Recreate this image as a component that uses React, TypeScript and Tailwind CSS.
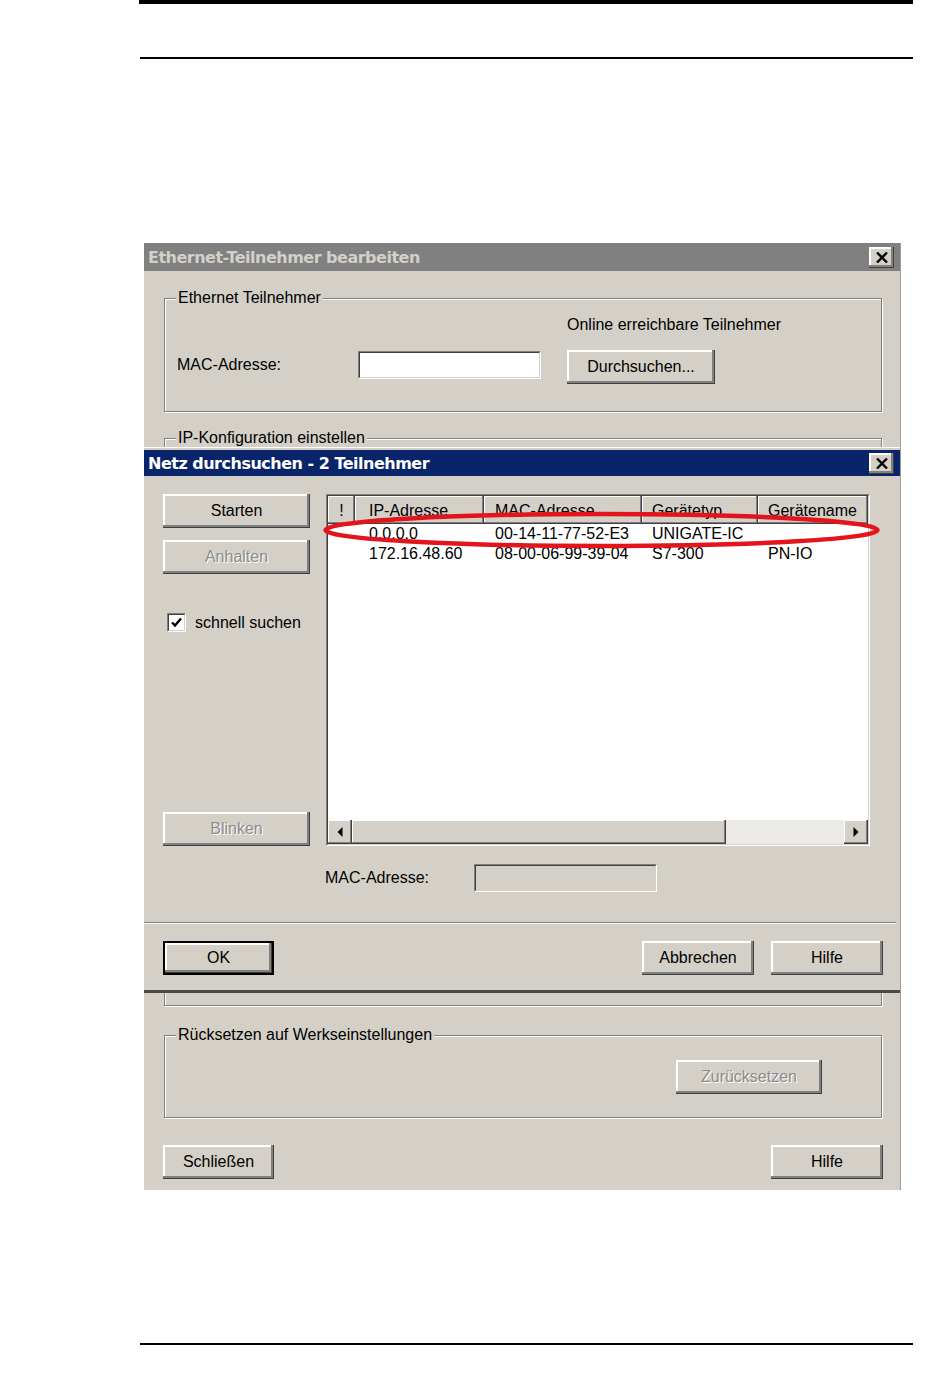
import type { ReactNode } from "react";

const raised =
  "shadow-[inset_-1px_-1px_0_#404040,inset_-3px_-3px_0_#808080,inset_2px_2px_0_#ffffff]";
const headerRaised =
  "shadow-[inset_-1px_-1px_0_#404040,inset_-2px_-2px_0_#808080,inset_1px_1px_0_#ffffff]";

const columns = [
  { title: "!", width: "w-[27px]", pad: "justify-center" },
  { title: "IP-Adresse", width: "w-[129px]", pad: "pl-[14px]" },
  { title: "MAC-Adresse", width: "w-[158px]", pad: "pl-[11px]" },
  { title: "Gerätetyp", width: "w-[116px]", pad: "pl-[10px]" },
  { title: "Gerätename", width: "w-[110px]", pad: "pl-[10px]" },
];

const rows = [
  ["", "0.0.0.0", "00-14-11-77-52-E3", "UNIGATE-IC", ""],
  ["", "172.16.48.60", "08-00-06-99-39-04", "S7-300", "PN-IO"],
];

function Button({
  label,
  className = "",
  disabled = false,
  isDefault = false,
}: {
  label: string;
  className?: string;
  disabled?: boolean;
  isDefault?: boolean;
}) {
  return (
    <div
      className={`flex h-[34px] shrink-0 items-center justify-center bg-[#d4d0c8] text-[16px] ${
        isDefault ? "border-2 border-black" : ""
      } ${raised} ${
        disabled ? "text-[#8c8c8c] [text-shadow:1px_1px_0_#ffffff]" : "text-black"
      } ${className}`}
    >
      {label}
    </div>
  );
}

function CloseBox() {
  return (
    <div className={`flex h-[21px] w-[25px] items-center justify-center bg-[#d4d0c8] ${raised}`}>
      <svg width="12" height="11" viewBox="0 0 12 11">
        <path d="M1 0.5 L11 10.5 M11 0.5 L1 10.5" stroke="#000" strokeWidth="2.4" />
      </svg>
    </div>
  );
}

function TitleBar({ title, active, height }: { title: string; active?: boolean; height: string }) {
  return (
    <div
      className={`flex ${height} items-center justify-between pl-[4px] pr-[6px] ${
        active ? "bg-[#0a246a] text-white" : "bg-[#808080] text-[#d4d0c8]"
      }`}
    >
      <span className="pt-[1px] font-['DejaVu_Sans',sans-serif] text-[16px] font-bold tracking-[-0.5px]">
        {title}
      </span>
      <CloseBox />
    </div>
  );
}

function GroupBox({
  label,
  className = "",
  children,
}: {
  label: string;
  className?: string;
  children?: ReactNode;
}) {
  return (
    <div
      className={`relative border border-[#808080] shadow-[inset_1px_1px_0_#ffffff,1px_1px_0_#ffffff] ${className}`}
    >
      <span className="absolute left-[11px] top-[-10px] bg-[#d4d0c8] px-[2px] text-[16px] leading-[18px]">
        {label}
      </span>
      {children}
    </div>
  );
}

function Sunken({ className = "", children }: { className?: string; children?: ReactNode }) {
  return (
    <div className={`border border-t-[#808080] border-l-[#808080] border-b-white border-r-white ${className}`}>
      <div className="h-full w-full border border-t-[#404040] border-l-[#404040] border-b-[#d4d0c8] border-r-[#d4d0c8]">
        {children}
      </div>
    </div>
  );
}

function Arrow({ dir }: { dir: "left" | "right" }) {
  return (
    <div className={`flex h-[24px] w-[24px] items-center justify-center bg-[#d4d0c8] ${headerRaised}`}>
      <svg width="6" height="10" viewBox="0 0 6 10">
        <path d={dir === "left" ? "M5.5 0 L0.5 5 L5.5 10 Z" : "M0.5 0 L5.5 5 L0.5 10 Z"} fill="#000" />
      </svg>
    </div>
  );
}

function ListView() {
  return (
    <Sunken className="ml-[16px] h-[352px] w-[544px]">
      <div className="flex h-full flex-col bg-white">
        <div className="flex h-[28px]">
          {columns.map((c) => (
            <div
              key={c.title}
              className={`flex items-center bg-[#d4d0c8] pt-[2px] text-[16px] ${c.width} ${c.pad} ${headerRaised}`}
            >
              {c.title}
            </div>
          ))}
        </div>
        {rows.map((r, i) => (
          <div key={i} className="flex h-[20px] items-center text-[16px]">
            {r.map((cell, j) => (
              <div key={j} className={`flex ${columns[j].width} ${columns[j].pad}`}>
                {cell}
              </div>
            ))}
          </div>
        ))}
        <div className="flex-1" />
        <div className="flex h-[24px]">
          <Arrow dir="left" />
          <div className={`w-[374px] bg-[#d4d0c8] ${headerRaised}`} />
          <div className="flex-1 bg-[#eceae6]" />
          <Arrow dir="right" />
        </div>
      </div>
    </Sunken>
  );
}

function Checkbox() {
  return (
    <Sunken className="h-[19px] w-[19px]">
      <div className="flex h-full w-full items-center justify-center bg-white">
        <svg width="13" height="13" viewBox="0 0 13 13">
          <path d="M2 6.5 L5 9.5 L11 2.5" fill="none" stroke="#000" strokeWidth="2.4" />
        </svg>
      </div>
    </Sunken>
  );
}

function SearchDialog() {
  return (
    <div className="absolute left-0 top-[204px] h-[546px] w-[756px] border-t border-b-[3px] border-t-white border-b-[#4a4a4a] bg-[#d4d0c8] pt-[2px]">
      <TitleBar title="Netz durchsuchen - 2 Teilnehmer" active height="h-[26px]" />
      <div className="flex flex-col pt-[18px]">
        <div className="flex h-[352px] pl-[19px]">
          <div className="flex w-[147px] flex-col">
            <Button label="Starten" />
            <Button label="Anhalten" disabled className="mt-[12px]" />
            <div className="ml-[4px] mt-[39px] flex h-[19px] items-center gap-[9px] text-[16px]">
              <Checkbox />
              <span>schnell suchen</span>
            </div>
            <Button label="Blinken" disabled className="mt-auto" />
          </div>
          <ListView />
        </div>
        <div className="mt-[18px] flex h-[28px] items-center pl-[181px] text-[16px]">
          <span className="w-[149px]">MAC-Adresse:</span>
          <Sunken className="h-[28px] w-[183px]" />
        </div>
        <div className="mr-[4px] mt-[30px] h-[2px] border-t border-b border-t-[#808080] border-b-white" />
        <div className="mt-[17px] flex pl-[19px] pr-[17px]">
          <Button label="OK" isDefault className="w-[111px]" />
          <Button label="Abbrechen" className="ml-auto w-[112px]" />
          <Button label="Hilfe" className="ml-[17px] w-[112px]" />
        </div>
      </div>
      <svg
        className="absolute left-[170px] top-[58px]"
        width="576"
        height="48"
        viewBox="0 0 576 48"
      >
        <ellipse cx="287.5" cy="24" rx="276" ry="16" fill="none" stroke="#e3141c" strokeWidth="4.5" />
      </svg>
    </div>
  );
}

export default function App() {
  return (
    <div className="h-[1397px] w-[950px] overflow-hidden bg-white font-['Liberation_Sans',Arial,sans-serif] text-black">
      <div className="ml-[139px] h-[4px] w-[774px] bg-black" />
      <div className="ml-[140px] mt-[53px] h-[2px] w-[773px] bg-black" />

      <div className="relative ml-[144px] mt-[184px] h-[947px] w-[757px] border-r border-[#a09c94] bg-[#d4d0c8]">
        <TitleBar title="Ethernet-Teilnehmer bearbeiten" height="h-[28px]" />

        <GroupBox label="Ethernet Teilnehmer" className="ml-[20px] mt-[27px] h-[114px] w-[718px]">
          <div className="grid grid-cols-[155px_183px_auto] gap-x-[26px] gap-y-[16px] pl-[12px] pt-[17px] text-[16px]">
            <div />
            <div />
            <div className="leading-[18px]">Online erreichbare Teilnehmer</div>
            <div className="mt-[1px] leading-[28px]">MAC-Adresse:</div>
            <Sunken className="mt-[1px] h-[28px] w-[183px]">
              <div className="h-full w-full bg-white" />
            </Sunken>
            <Button label="Durchsuchen..." className="w-[148px]" />
          </div>
        </GroupBox>

        <GroupBox label="IP-Konfiguration einstellen" className="ml-[20px] mt-[26px] h-[568px] w-[718px]" />

        <GroupBox label="Rücksetzen auf Werkseinstellungen" className="ml-[20px] mt-[29px] h-[83px] w-[718px]">
          <div className="flex justify-end pr-[59px] pt-[24px]">
            <Button label="Zurücksetzen" disabled className="w-[146px]" />
          </div>
        </GroupBox>

        <div className="ml-[19px] mt-[27px] flex w-[720px] justify-between">
          <Button label="Schließen" className="w-[111px]" />
          <Button label="Hilfe" className="w-[112px]" />
        </div>

        <SearchDialog />
      </div>

      <div className="ml-[140px] mt-[153px] h-[2px] w-[773px] bg-black" />
    </div>
  );
}
